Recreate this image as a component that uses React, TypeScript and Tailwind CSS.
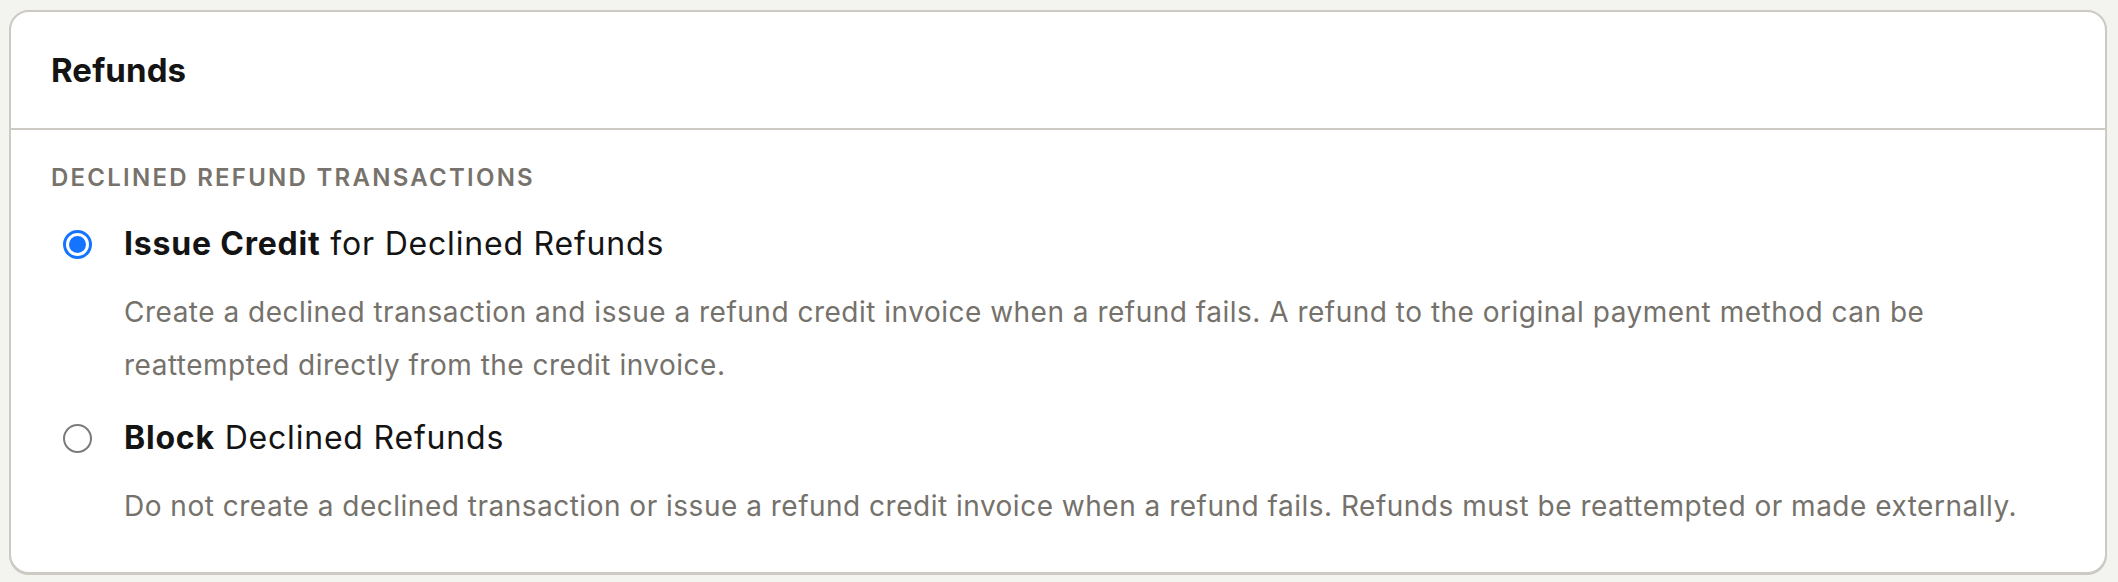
import { useState } from 'react'

interface RefundOption {
  id: string
  strong: string
  rest: string
  description: string
}

const options: RefundOption[] = [
  {
    id: 'issue-credit',
    strong: 'Issue Credit',
    rest: ' for Declined Refunds',
    description:
      'Create a declined transaction and issue a refund credit invoice when a refund fails. A refund to the original payment method can be reattempted directly from the credit invoice.',
  },
  {
    id: 'block',
    strong: 'Block',
    rest: ' Declined Refunds',
    description:
      'Do not create a declined transaction or issue a refund credit invoice when a refund fails. Refunds must be reattempted or made externally.',
  },
]

const RadioDot = ({ checked }: { checked: boolean }) => {
  if (checked) {
    return (
      <span className="flex h-[29px] w-[29px] shrink-0 items-center justify-center rounded-full border-[3px] border-[#1473ff] bg-white">
        <span className="h-[17px] w-[17px] rounded-full bg-[#1473ff]" />
      </span>
    )
  }
  return <span className="h-[29px] w-[29px] shrink-0 rounded-full border-2 border-[#7b7b7b] bg-white" />
}

export default function App() {
  const [selected, setSelected] = useState('issue-credit')

  return (
    <div
      className="min-h-[582px] w-full bg-[#f3f3ef] pl-[9px] pr-[11px] pt-[10px]"
      style={{ fontFamily: 'Inter, "Liberation Sans", sans-serif' }}
    >
      <section className="rounded-[20px] border-2 border-[#cdc9c3] bg-white shadow-[0_1px_0_#cdc9c3]">
        {/* Header */}
        <div className="flex h-[118px] items-center border-b-2 border-[#cdc9c3] px-[40px]">
          <h2 className="text-[33px] font-bold leading-none tracking-[0.1px] text-[#141414]">Refunds</h2>
        </div>

        {/* Body */}
        <div className="px-[40px] pb-[39px] pt-[33px]">
          <div className="text-[24px] font-semibold leading-[30px] tracking-[2.25px] text-[#77736c]">
            DECLINED REFUND TRANSACTIONS
          </div>

          <div className="mt-[31px] flex flex-col gap-[26px]">
            {options.map(opt => (
              <label key={opt.id} className="flex cursor-pointer flex-col" onClick={() => setSelected(opt.id)}>
                <div className="flex items-center">
                  <span className="ml-[12px] mr-[32px] flex">
                    <RadioDot checked={selected === opt.id} />
                  </span>
                  <span className="text-[32px] leading-[40px] tracking-[0.8px] text-[#141414]">
                    <strong className="font-bold">{opt.strong}</strong>
                    {opt.rest}
                  </span>
                </div>
                <p className="mt-[22px] pl-[73px] text-[28px] leading-[53px] tracking-[0.5px] text-[#75716b]">
                  {opt.description}
                </p>
              </label>
            ))}
          </div>
        </div>
      </section>
    </div>
  )
}
